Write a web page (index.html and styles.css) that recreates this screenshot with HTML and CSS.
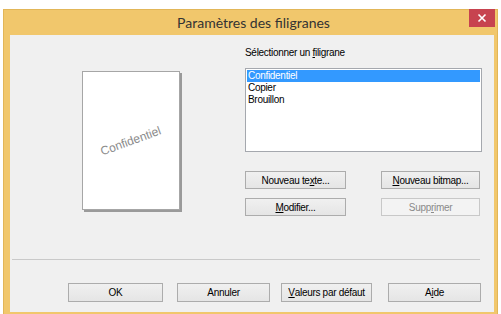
FILE: index.html
```html
<!DOCTYPE html>
<html lang="fr">
<head>
<meta charset="utf-8">
<title>Paramètres des filigranes</title>
<link rel="stylesheet" href="styles.css">
</head>
<body>
<div class="window">
  <div class="titlebar">
    <div class="title">Paramètres des filigranes</div>
    <div class="close">
      <svg width="10" height="10" viewBox="0 0 10 10"><path d="M1.5 1.5 L8.5 8.5 M8.5 1.5 L1.5 8.5" stroke="#fff" stroke-width="1.6" fill="none"/></svg>
    </div>
  </div>
  <div class="client">
    <div class="top">
      <div class="preview">
        <div class="paper"><span class="wm">Confidentiel</span></div>
      </div>
      <div class="side">
        <div class="label">Sélectionner un <u>f</u>iligrane</div>
        <div class="listbox">
          <div class="item selected">Confidentiel</div>
          <div class="item">Copier</div>
          <div class="item">Brouillon</div>
        </div>
        <div class="btngrid">
          <div class="btn">Nouveau te<u>x</u>te...</div>
          <div class="btn"><u>N</u>ouveau bitmap...</div>
          <div class="btn"><u>M</u>odifier...</div>
          <div class="btn disabled">Supp<u>r</u>imer</div>
        </div>
      </div>
    </div>
    <div class="sep"></div>
    <div class="bottom">
      <div class="btn b1">OK</div>
      <div class="btn b2">Annuler</div>
      <div class="btn b3"><u>V</u>aleurs par défaut</div>
      <div class="btn b4">A<u>i</u>de</div>
    </div>
  </div>
</div>
</body>
</html>
```
FILE: styles.css
```css
html, body {
  margin: 0;
  padding: 0;
  background: #ffffff;
}
body {
  font-family: "Liberation Sans", Arial, sans-serif;
}
.window {
  margin: 9px 0 0 3px;
  width: 495px;
  height: 305px;
  box-sizing: border-box;
  background: #f1c76c;
  border: 1px solid #e2b658;
  border-bottom: none;
  display: flex;
  flex-direction: column;
}
.titlebar {
  height: 25px;
  display: flex;
  align-items: flex-start;
}
.title {
  flex: 1;
  text-align: center;
  font-family: Lato, "Open Sans", sans-serif;
  font-size: 14px;
  line-height: 25px;
  color: #333333;
  padding-left: 34px;
}
.close {
  width: 26px;
  height: 18px;
  margin-right: 2px;
  margin-top: -1px;
  background: #c7434f;
  display: flex;
  align-items: center;
  justify-content: center;
}
.client {
  margin: 0 3px 2px 6px;
  flex: 1;
  background: #f0f0f0;
  display: flex;
  flex-direction: column;
  font-size: 10px;
  letter-spacing: -0.3px;
  color: #000;
}
.top {
  display: flex;
  height: 224px;
}
.preview {
  width: 235px;
  padding: 36px 0 0 72px;
  box-sizing: border-box;
}
.paper {
  width: 96px;
  height: 137px;
  background: #fff;
  border: 1px solid #a6a6a6;
  box-shadow: 2px 2px 0 #9a9a9a;
  display: flex;
  align-items: center;
  justify-content: center;
}
.wm {
  font-size: 12px;
  letter-spacing: 0;
  color: #8c8c8c;
  transform: rotate(-20deg);
  display: block;
}
.side {
  display: flex;
  flex-direction: column;
  padding-top: 12px;
}
.label {
  height: 12px;
  line-height: 12px;
}
.listbox {
  margin-top: 9px;
  width: 237px;
  height: 84px;
  box-sizing: border-box;
  background: #fff;
  border: 1px solid #a5a8ae;
  padding: 1px;
}
.item {
  height: 12px;
  line-height: 12px;
  padding-left: 1px;
}
.item.selected {
  background: #3399ff;
  color: #fff;
}
.btngrid {
  margin-top: 19px;
  display: grid;
  grid-template-columns: 101px 99px;
  column-gap: 35px;
  row-gap: 9px;
}
.btn {
  height: 18px;
  box-sizing: border-box;
  border: 1px solid #acacac;
  background: linear-gradient(#f0f0f0, #e5e5e5);
  display: flex;
  align-items: center;
  justify-content: center;
}
.btn.disabled {
  border-color: #c8c8c8;
  background: #f3f3f3;
  color: #8a8a8a;
}
.sep {
  margin-left: 2px;
  width: 468px;
  height: 1px;
  background: #c9c9c9;
}
.bottom {
  display: flex;
  padding: 23px 0 0 58px;
}
.bottom .btn {
  height: 19px;
}
.b1 { width: 95px; }
.b2 { width: 93px; margin-left: 14px; }
.b3 { width: 91px; margin-left: 11px; }
.b4 { width: 93px; margin-left: 16px; }
```
